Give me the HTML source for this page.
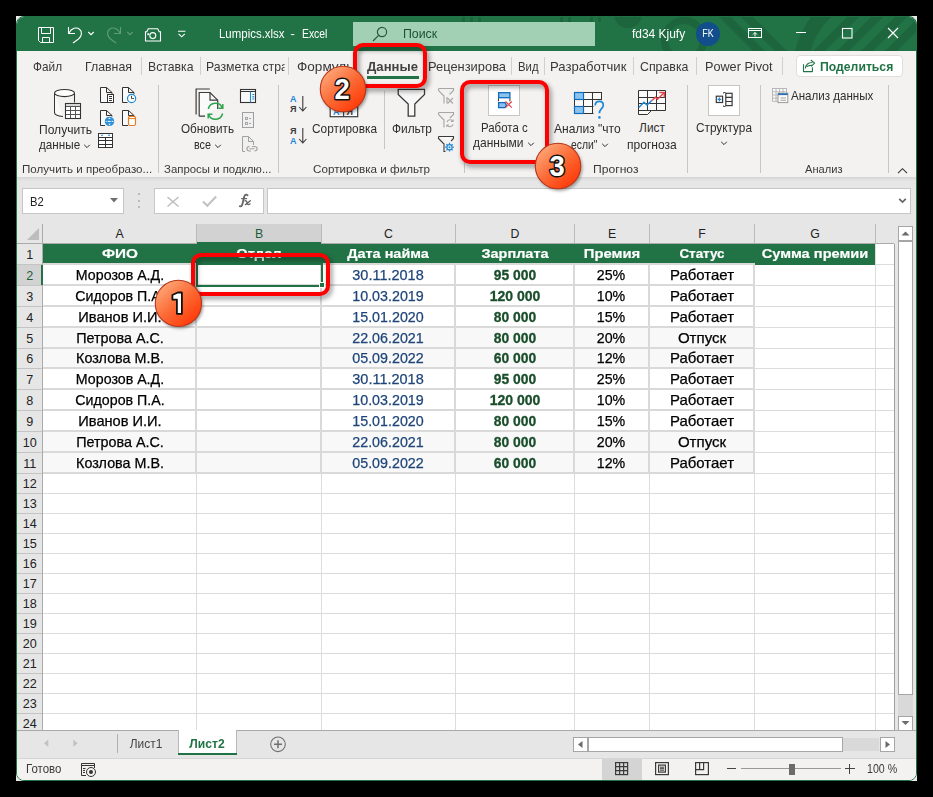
<!DOCTYPE html>
<html><head><meta charset="utf-8"><style>
html,body{margin:0;padding:0;}
body{width:933px;height:797px;background:#000;position:relative;overflow:hidden;font-family:"Liberation Sans",sans-serif;}
#outer{position:absolute;left:16px;top:16px;width:901px;height:765px;background:#eaeaea;}
#win{position:absolute;left:16px;top:16px;width:901px;height:765px;box-sizing:border-box;border:1px solid #217346;border-radius:8px;overflow:hidden;background:#f3f2f1;}
.t{position:absolute;white-space:nowrap;}
.r{position:absolute;}
</style></head><body>
<div id="outer"></div>
<div id="win">
<div class="r" style="left:0px;top:-1px;width:899px;height:35px;background:#217346;"></div>
<svg class="r" style="left:0px;top:-1px;" width="899" height="35" viewBox="0 0 899 35"><g fill="#1d653c" transform="translate(-17,-16)">
<circle cx="628" cy="14" r="14"/>
<path d="M684 17 a23 23 0 1 0 0.01 0 Z M684 24 a16 16 0 1 1 -0.01 0 Z" fill-rule="evenodd"/>
<path d="M880 -17 a87 87 0 1 0 0.01 0 Z M880 -2 a72 72 0 1 1 -0.01 0 Z" fill-rule="evenodd"/>
<path d="M718 16 L730 16 L765 51 L753 51 Z"/>
<path d="M740 16 L752 16 L787 51 L775 51 Z"/>
<path d="M848 16 L860 16 L825 51 L813 51 Z"/>
<path d="M872 16 L884 16 L849 51 L837 51 Z"/>
<path d="M896 16 L908 16 L873 51 L861 51 Z"/>
<path d="M920 16 L932 16 L897 51 L885 51 Z"/>
<path d="M462 16 h3 v6 h-3 Z M470 16 h3 v6 h-3 Z M478 16 h3 v6 h-3 Z M560 16 h3 v6 h-3 Z M568 16 h3 v6 h-3 Z M590 16 h3 v6 h-3 Z M598 16 h3 v6 h-3 Z"/>
</g></svg>
<svg class="r" style="left:17px;top:5px;" width="24" height="24" viewBox="0 0 24 24"><g fill="none" stroke="#fff" stroke-width="1"><path d="M4.5 5.5 H19.5 V20.5 H6.5 L4.5 18.5 Z"/><path d="M7.5 5.5 V11.5 H16.5 V5.5"/><path d="M8.5 20.5 V15.5 H15.5 V20.5"/></g></svg>
<svg class="r" style="left:47px;top:5px;" width="22" height="24" viewBox="0 0 22 24"><g fill="none" stroke="#fff" stroke-width="1.1"><path d="M4.5 5 V11.5 H11"/><path d="M4.8 11.2 C7.5 6 12.5 4.8 15.5 7.2 C18.5 9.6 18 14 14.5 17 L9 21"/></g></svg>
<svg class="r" style="left:69px;top:12px;" width="10" height="8" viewBox="0 0 10 8"><path d="M2.3 3 L5 5.7 L7.7 3" fill="none" stroke="#fff" stroke-width="1.1"/></svg>
<svg class="r" style="left:86px;top:5px;" width="22" height="24" viewBox="0 0 22 24"><g fill="none" stroke="#5e9d78" stroke-width="1.1"><path d="M17.5 5 V11.5 H11"/><path d="M17.2 11.2 C14.5 6 9.5 4.8 6.5 7.2 C3.5 9.6 4 14 7.5 17 L13 21"/></g></svg>
<svg class="r" style="left:108px;top:12px;" width="10" height="8" viewBox="0 0 10 8"><path d="M2.3 3 L5 5.7 L7.7 3" fill="none" stroke="#5e9d78" stroke-width="1.1"/></svg>
<svg class="r" style="left:125px;top:9px;" width="22" height="18" viewBox="0 0 22 18"><g fill="none" stroke="#fff" stroke-width="1.1"><path d="M3.5 5.8 H4.8 L6.3 2.8 H15.7 L17.2 5.8 H18.5 V15 H3.5 Z"/><circle cx="10.8" cy="9.6" r="3"/></g><rect x="5.3" y="7.3" width="1.8" height="1.8" fill="#fff"/></svg>
<svg class="r" style="left:159px;top:11px;" width="12" height="12" viewBox="0 0 12 12"><g fill="none" stroke="#fff" stroke-width="1.1"><path d="M2 3.3 H9.4"/><path d="M2.6 5.8 L5.7 8.8 L8.8 5.8"/></g></svg>
<div class="t" style="top:11.00px;font-size:12.4px;line-height:12.4px;color:#fff;transform:scaleX(0.9241);transform-origin:left top;left:202.30px;">Lumpics.xlsx</div>
<div class="t" style="top:11.00px;font-size:12.4px;line-height:12.4px;color:#fff;left:273.50px;">-</div>
<div class="t" style="top:11.00px;font-size:12.4px;line-height:12.4px;color:#fff;transform:scaleX(0.8378);transform-origin:left top;left:285.40px;">Excel</div>
<div class="r" style="left:336px;top:5px;width:242px;height:24px;background:#a2d0b5;"></div>
<svg class="r" style="left:354px;top:9px;" width="18" height="16" viewBox="0 0 18 16"><g fill="none" stroke="#265a3a" stroke-width="1.2"><circle cx="11" cy="6" r="4.6"/><path d="M7.6 9.4 L2 15"/></g></svg>
<div class="t" style="top:10.92px;font-size:12.5px;line-height:12.5px;color:#1c5231;transform:scaleX(0.9859);transform-origin:left top;left:386.00px;">Поиск</div>
<div class="t" style="top:11.00px;font-size:12.4px;line-height:12.4px;color:#fff;transform:scaleX(0.9647);transform-origin:left top;left:615.00px;">fd34 Kjufy</div>
<svg class="r" style="left:679px;top:5px;" width="24" height="24" viewBox="0 0 24 24"><circle cx="12" cy="12" r="12" fill="#124d8c"/></svg>
<div class="t" style="top:11.43px;font-size:11.3px;line-height:11.3px;color:#fff;transform:scaleX(0.7897);transform-origin:center top;left:391.00px;width:600px;text-align:center;">FK</div>
<svg class="r" style="left:730px;top:10px;" width="16" height="12" viewBox="0 0 16 12"><g fill="none" stroke="#fff" stroke-width="1"><rect x="1.5" y="1.5" width="13" height="9"/><path d="M1.5 3.5 H14.5"/><path d="M8 9.5 V5.5 M6 7.5 L8 5.5 L10 7.5"/></g></svg>
<div class="r" style="left:779px;top:15px;width:10px;height:1px;background:#fff;"></div>
<svg class="r" style="left:824px;top:10px;" width="12" height="12" viewBox="0 0 12 12"><rect x="1.5" y="1.5" width="9.5" height="9.5" fill="none" stroke="#fff" stroke-width="1.1"/></svg>
<svg class="r" style="left:870px;top:10px;" width="12" height="12" viewBox="0 0 12 12"><path d="M1 1 L11 11 M11 1 L1 11" stroke="#fff" stroke-width="1.2"/></svg>
<div class="r" style="left:0px;top:34px;width:899px;height:126px;background:#f3f2f1;"></div>
<div class="t" style="top:43.20px;font-size:13px;line-height:13px;color:#383838;transform:scaleX(0.9077);transform-origin:left top;left:15.50px;">Файл</div>
<div class="t" style="top:43.20px;font-size:13px;line-height:13px;color:#383838;transform:scaleX(0.9495);transform-origin:left top;left:68.20px;">Главная</div>
<div class="t" style="top:43.20px;font-size:13px;line-height:13px;color:#383838;transform:scaleX(0.9415);transform-origin:left top;left:130.70px;">Вставка</div>
<div class="t" style="top:43.20px;font-size:13px;line-height:13px;color:#383838;transform:scaleX(0.9434);transform-origin:left top;left:188.50px;clip-path:inset(-5px calc(100% - 83.2px) -5px -5px);">Разметка стра</div>
<div class="t" style="top:43.20px;font-size:13px;line-height:13px;color:#383838;transform:scaleX(1.0427);transform-origin:left top;left:280.00px;">Формулы</div>
<div class="t" style="top:43.20px;font-size:13px;line-height:13px;color:#383838;transform:scaleX(0.9909);transform-origin:left top;left:411.00px;">Рецензирова</div>
<div class="t" style="top:43.20px;font-size:13px;line-height:13px;color:#383838;transform:scaleX(0.8712);transform-origin:left top;left:500.50px;">Вид</div>
<div class="t" style="top:43.20px;font-size:13px;line-height:13px;color:#383838;transform:scaleX(1.0081);transform-origin:left top;left:533.00px;">Разработчик</div>
<div class="t" style="top:43.20px;font-size:13px;line-height:13px;color:#383838;transform:scaleX(0.9505);transform-origin:left top;left:622.70px;">Справка</div>
<div class="t" style="top:43.20px;font-size:13px;line-height:13px;color:#383838;transform:scaleX(0.9733);transform-origin:left top;left:688.00px;">Power Pivot</div>
<div class="r" style="left:124px;top:40px;width:1px;height:18px;background:#d2d0ce;"></div>
<div class="r" style="left:183px;top:40px;width:1px;height:18px;background:#d2d0ce;"></div>
<div class="r" style="left:271px;top:40px;width:1px;height:18px;background:#d2d0ce;"></div>
<div class="r" style="left:494px;top:40px;width:1px;height:18px;background:#d2d0ce;"></div>
<div class="r" style="left:527px;top:40px;width:1px;height:18px;background:#d2d0ce;"></div>
<div class="r" style="left:616px;top:40px;width:1px;height:18px;background:#d2d0ce;"></div>
<div class="r" style="left:679px;top:40px;width:1px;height:18px;background:#d2d0ce;"></div>
<div class="r" style="left:765px;top:40px;width:1px;height:18px;background:#d2d0ce;"></div>
<div class="t" style="top:43.20px;font-size:13px;line-height:13px;color:#424242;transform:scaleX(1.0092);transform-origin:left top;font-weight:bold;left:350.00px;">Данные</div>
<div class="r" style="left:350px;top:59px;width:52px;height:3px;background:#217346;"></div>
<div class="r" style="left:779px;top:38px;width:107px;height:22px;background:#fff;border:1px solid #e1dfdd;border-radius:4px;box-sizing:border-box;"></div>
<svg class="r" style="left:783px;top:40px;" width="18" height="18" viewBox="0 0 18 18"><g fill="none" stroke="#217346" stroke-width="1.1" stroke-linejoin="round"><path d="M3.5 7.3 V14.6 H12.4 V10.2"/><path d="M5.3 11.5 C5.8 7.5 8.5 5.5 12.5 5.5"/><path d="M10.8 3 L14.6 6.2 L11.2 9.4"/><path d="M6.5 9.8 C8 8.7 9.8 8.3 12 8.4"/></g></svg>
<div class="t" style="top:43.00px;font-size:13px;line-height:13px;color:#217346;transform:scaleX(0.9394);transform-origin:left top;font-weight:bold;left:803.20px;">Поделиться</div>
<div class="r" style="left:141px;top:68px;width:1px;height:88px;background:#c8c6c4;"></div>
<div class="r" style="left:261px;top:68px;width:1px;height:88px;background:#c8c6c4;"></div>
<div class="r" style="left:367px;top:74px;width:1px;height:58px;background:#c8c6c4;"></div>
<div class="r" style="left:447px;top:143px;width:1px;height:13px;background:#c8c6c4;"></div>
<div class="r" style="left:670px;top:68px;width:1px;height:88px;background:#c8c6c4;"></div>
<div class="r" style="left:743px;top:68px;width:1px;height:88px;background:#c8c6c4;"></div>
<div class="r" style="left:871px;top:68px;width:1px;height:88px;background:#c8c6c4;"></div>
<div class="t" style="top:146.77px;font-size:11.5px;line-height:11.5px;color:#3b3a39;transform:scaleX(1.0082);transform-origin:left top;left:4.60px;">Получить и преобразо...</div>
<div class="t" style="top:146.77px;font-size:11.5px;line-height:11.5px;color:#3b3a39;transform:scaleX(0.9912);transform-origin:left top;left:147.00px;">Запросы и подклю...</div>
<div class="t" style="top:146.77px;font-size:11.5px;line-height:11.5px;color:#3b3a39;transform:scaleX(1.0157);transform-origin:left top;left:295.60px;">Сортировка и фильтр</div>
<div class="t" style="top:146.77px;font-size:11.5px;line-height:11.5px;color:#3b3a39;transform:scaleX(1.0544);transform-origin:left top;left:575.50px;">Прогноз</div>
<div class="t" style="top:146.77px;font-size:11.5px;line-height:11.5px;color:#3b3a39;transform:scaleX(0.9662);transform-origin:left top;left:788.30px;">Анализ</div>
<svg class="r" style="left:879px;top:149px;" width="13" height="9" viewBox="0 0 13 9"><path d="M2 7.2 L6.5 2.7 L11 7.2" fill="none" stroke="#333" stroke-width="1.1"/></svg>
<svg class="r" style="left:33px;top:68px;" width="34" height="36" viewBox="0 0 34 36"><g fill="#fafafa" stroke="#333" stroke-width="1.05">
<path d="M4.5 8 V27.5 C4.5 29.8 8.5 31.2 13 31.5"/>
<path d="M24.5 8 V17.5"/>
<ellipse cx="14.5" cy="8" rx="10" ry="3.6" fill="#fff"/>
<rect x="15.5" y="18.5" width="15" height="15" fill="#fff"/>
</g>
<rect x="16.2" y="19.2" width="13.6" height="2" fill="#d4d4d4"/>
<g stroke="#555" stroke-width="1"><path d="M15.5 21.5 H30.5 M15.5 25.5 H30.5 M15.5 29.5 H30.5 M20.5 21.5 V33.5 M25.5 21.5 V33.5"/></g>
<rect x="15.5" y="18.5" width="15" height="15" fill="none" stroke="#333" stroke-width="1.05"/></svg>
<div class="t" style="top:106.77px;font-size:12.2px;line-height:12.2px;color:#2e2e2e;transform:scaleX(0.9903);transform-origin:left top;left:21.60px;">Получить</div>
<div class="t" style="top:121.97px;font-size:12.2px;line-height:12.2px;color:#2e2e2e;transform:scaleX(0.9594);transform-origin:left top;left:22.00px;">данные</div>
<svg class="r" style="left:65.8px;top:126px;" width="8" height="6" viewBox="0 0 8 6"><path d="M1.2 1.8 L4 4.6 L6.8 1.8" fill="none" stroke="#2e2e2e" stroke-width="1"/></svg>
<svg class="r" style="left:79px;top:67px;" width="44" height="44" viewBox="0 0 44 44"><path d="M10.5 8.5 V3.5 H4.5 V18.5 H11" fill="#fafafa" stroke="#333" stroke-width="1"/><path d="M10.5 3.5 L16 8.5 V10 M10.5 8.5 H16" fill="none" stroke="#333" stroke-width="1"/><rect x="11.5" y="10.5" width="6" height="8" fill="#fff" stroke="#333" stroke-width="1"/><path d="M13 12.5 H16 M13 14.5 H16 M13 16.5 H16" stroke="#333" stroke-width="1"/><path d="M32.5 8.5 V3.5 H26.5 V18.5 H31.5" fill="#fafafa" stroke="#333" stroke-width="1"/><path d="M32.5 3.5 L38 8.5 V10 M32.5 8.5 H38" fill="none" stroke="#333" stroke-width="1"/><circle cx="35.6" cy="14.5" r="4.1" fill="#fff" stroke="#1e88d6" stroke-width="1.2"/><path d="M35.5 11.8 V14.6 H38" fill="none" stroke="#333" stroke-width="0.9"/><path d="M10.5 31.5 V26.5 H4.5 V41.5 H9" fill="#fafafa" stroke="#333" stroke-width="1"/><path d="M10.5 26.5 L16 31.5 V32.5 M10.5 31.5 H16" fill="none" stroke="#333" stroke-width="1"/><circle cx="13.5" cy="37.4" r="4.7" fill="#2b8fd9"/><path d="M9.6 37.4 H17.4" stroke="#fff" stroke-width="1" stroke-dasharray="1 1 3 1 3 1"/><path d="M12.2 35 L13.5 33.5 L14.8 35 Z M12.2 39.8 L13.5 41.3 L14.8 39.8 Z" fill="#fff"/><path d="M32.5 31.5 V26.5 H26.5 V41.5 H32" fill="#fafafa" stroke="#333" stroke-width="1"/><path d="M32.5 26.5 L38 31.5 V32 M32.5 31.5 H38" fill="none" stroke="#333" stroke-width="1"/><rect x="32.5" y="32.3" width="7" height="9.2" rx="1.8" fill="#fff" stroke="#e07b20" stroke-width="1.2"/><path d="M32.5 34.6 H39.5" stroke="#e07b20" stroke-width="1"/></svg>
<svg class="r" style="left:79px;top:113px;" width="20" height="20" viewBox="0 0 20 20"><rect x="2.5" y="3.5" width="14" height="14" fill="#fff" stroke="#333" stroke-width="1"/>
<path d="M2.5 7.5 H16.5 M2.5 10.5 H16.5 M2.5 14.5 H16.5 M9.5 7.5 V17.5" stroke="#333" stroke-width="1"/>
<path d="M4.5 4.8 H7.5 L6 6.3 Z M11.5 4.8 H14.5 L13 6.3 Z" fill="#1e88d6"/></svg>
<svg class="r" style="left:177px;top:70px;" width="32" height="34" viewBox="0 0 32 34"><path d="M2.1 27.4 V2 H15.8" fill="none" stroke="#3b3a39" stroke-width="1.2"/>
<path d="M5.2 29.2 V5.5 H16 L23.7 13.2 V22" fill="#fafafa" stroke="#3b3a39" stroke-width="1.2"/>
<path d="M5.2 29.2 H11" fill="none" stroke="#3b3a39" stroke-width="1.2"/>
<path d="M16 5.5 V13.2 H23.7" fill="none" stroke="#3b3a39" stroke-width="1.2"/>
<g fill="none" stroke="#2ea44f" stroke-width="1.5"><path d="M14.3 22 A7.3 7.3 0 0 1 28.3 21"/><path d="M28.6 26.5 A7.3 7.3 0 0 1 14.6 27.5"/></g>
<path d="M24.5 21.3 H28.8 V17" fill="none" stroke="#2ea44f" stroke-width="1.5"/>
<path d="M18.4 27.3 H14.2 V31.5" fill="none" stroke="#2ea44f" stroke-width="1.5"/></svg>
<div class="t" style="top:106.17px;font-size:12.2px;line-height:12.2px;color:#2e2e2e;transform:scaleX(0.9613);transform-origin:left top;left:163.50px;">Обновить</div>
<div class="t" style="top:121.97px;font-size:12.2px;line-height:12.2px;color:#2e2e2e;transform:scaleX(0.8847);transform-origin:left top;left:177.00px;">все</div>
<svg class="r" style="left:196.5px;top:125.6px;" width="8" height="6" viewBox="0 0 8 6"><path d="M1.2 1.8 L4 4.6 L6.8 1.8" fill="none" stroke="#2e2e2e" stroke-width="1"/></svg>
<svg class="r" style="left:215px;top:67px;" width="32" height="72" viewBox="0 0 32 72"><rect x="8.5" y="5.5" width="15" height="13" fill="#fafafa" stroke="#333" stroke-width="1.1"/>
<path d="M8.5 7.5 H23.5" stroke="#333" stroke-width="1"/><path d="M18.5 7.5 V18.5" stroke="#1e88d6" stroke-width="1.1"/>
<path d="M20.3 10.5 H22.3 M20.3 12.8 H22.3 M20.3 15 H22.3" stroke="#1e88d6" stroke-width="1.2"/>
<rect x="10.5" y="28.5" width="11" height="15" fill="#f0f0f0" stroke="#a0a0a0" stroke-width="1"/>
<rect x="13.5" y="33.5" width="2" height="2" fill="none" stroke="#a0a0a0" stroke-width="0.9"/><rect x="13.5" y="38.5" width="2" height="2" fill="none" stroke="#a0a0a0" stroke-width="0.9"/>
<path d="M17 34.5 H19 M17 39.5 H19" stroke="#a0a0a0" stroke-width="0.9"/>
<path d="M10.5 67.5 V52.5 H16.5 L21.5 57.5 V61" fill="#f0f0f0" stroke="#a0a0a0" stroke-width="1"/><path d="M16.5 52.5 V57.5 H21.5" fill="none" stroke="#a0a0a0" stroke-width="1"/><path d="M10.5 67.5 H13" stroke="#a0a0a0" stroke-width="1"/>
<g fill="none" stroke="#a0a0a0" stroke-width="1.1"><path d="M17.5 62.5 C14 62.5 14 67 17.5 67 H19"/><path d="M20 62.5 H22.5 C26 62.5 26 67 22.5 67"/><path d="M17.5 64.8 H22.5"/></g></svg>
<div class="t" style="left:273px;top:78px;font-size:9px;line-height:9px;font-weight:bold;color:#1e88d6;">A</div>
<div class="t" style="left:273px;top:87.5px;font-size:9px;line-height:9px;font-weight:bold;color:#3b3a39;">Я</div>
<div class="t" style="left:273px;top:110px;font-size:9px;line-height:9px;font-weight:bold;color:#3b3a39;">Я</div>
<div class="t" style="left:273px;top:119.5px;font-size:9px;line-height:9px;font-weight:bold;color:#1e88d6;">A</div>
<svg class="r" style="left:281px;top:78px;" width="10" height="18" viewBox="0 0 10 18"><path d="M4.8 1 V16 M1.2 12 L4.8 16 L8.4 12" fill="none" stroke="#3b3a39" stroke-width="1.1"/></svg>
<svg class="r" style="left:281px;top:110px;" width="10" height="18" viewBox="0 0 10 18"><path d="M4.8 1 V16 M1.2 12 L4.8 16 L8.4 12" fill="none" stroke="#3b3a39" stroke-width="1.1"/></svg>
<svg class="r" style="left:312px;top:75px;" width="30" height="26" viewBox="0 0 30 26"><rect x="1.2" y="1.2" width="27.5" height="23.5" fill="#fff" stroke="#3b3a39" stroke-width="1.2"/>
<path d="M14.6 14 V24.7 M1.2 14 H28.7" stroke="#3b3a39" stroke-width="1.1"/>
<text x="4" y="23" font-size="9" font-weight="bold" fill="#1e88d6" font-family="Liberation Sans">A</text><text x="17.5" y="23" font-size="9" font-weight="bold" fill="#3b3a39" font-family="Liberation Sans">Я</text></svg>
<div class="t" style="top:106.17px;font-size:12.2px;line-height:12.2px;color:#2e2e2e;transform:scaleX(0.9720);transform-origin:left top;left:294.60px;">Сортировка</div>
<svg class="r" style="left:379px;top:71px;" width="31" height="30" viewBox="0 0 31 30"><path d="M2.2 1.3 H28.5 V6.5 L18.8 16 V28.2 H12.2 V16 L2.2 6.5 Z" fill="#f7f7f7" stroke="#3b3a39" stroke-width="1.3"/></svg>
<div class="t" style="top:106.17px;font-size:12.2px;line-height:12.2px;color:#2e2e2e;transform:scaleX(0.9758);transform-origin:left top;left:374.50px;">Фильтр</div>
<svg class="r" style="left:420px;top:70px;" width="18" height="18" viewBox="0 0 18 18"><path d="M1.5 1.5 H16.5 V3.5 L12.5 7.5 M10 10 V16.5 M1.5 1.5 V3.5 L7 9 V16.5" fill="#f0f0f0" stroke="#a6a6a6" stroke-width="1.1"/>
<path d="M10.5 11 L16 16.5 M16 11 L10.5 16.5" stroke="#a6a6a6" stroke-width="1.1"/></svg>
<svg class="r" style="left:420px;top:94px;" width="18" height="18" viewBox="0 0 18 18"><path d="M1.5 1.5 H16.5 V3.5 L13 7 M1.5 1.5 V3.5 L7 9 V16.5" fill="#f0f0f0" stroke="#a6a6a6" stroke-width="1.1"/>
<path d="M10 11 A3.3 3.3 0 0 1 16 10.5 M16 13.5 A3.3 3.3 0 0 1 10 14" fill="none" stroke="#a6a6a6" stroke-width="1.1"/><path d="M14 10.5 H16.2 V8.5 M12 14 H9.8 V16" fill="none" stroke="#a6a6a6" stroke-width="1"/></svg>
<svg class="r" style="left:420px;top:118px;" width="18" height="18" viewBox="0 0 18 18"><path d="M1.5 1.5 H16.5 V3.5 L14 6 M1.5 1.5 V3.5 L7 9 V16.5 H8.5" fill="#fafafa" stroke="#3b3a39" stroke-width="1.1"/>
<g fill="none" stroke="#1e88d6" stroke-width="1.2"><circle cx="12.5" cy="12.2" r="2.6"/><path d="M12.5 7.8 V9.3 M12.5 15.1 V16.6 M8.1 12.2 H9.6 M15.4 12.2 H16.9 M9.4 9.1 L10.4 10.1 M14.6 14.3 L15.6 15.3 M15.6 9.1 L14.6 10.1 M10.4 14.3 L9.4 15.3"/></g><circle cx="12.5" cy="12.2" r="1" fill="#1e88d6"/></svg>
<div class="r" style="left:471px;top:68px;width:32px;height:31px;background:#fff;border:1px solid #c8c6c4;box-sizing:border-box;"></div>
<svg class="r" style="left:479px;top:73px;" width="20" height="20" viewBox="0 0 20 20"><rect x="2.6" y="2.7" width="11.3" height="5" fill="#8cc3ec" stroke="#0f6cbd" stroke-width="1.3"/>
<path d="M2.5 8.3 V11.2 M13.9 8.3 V11.2" stroke="#3b3a39" stroke-width="1.1"/>
<path d="M2.6 12.6 H9 L10.5 15.2 L9 17.7 H2.6 Z" fill="#8cc3ec" stroke="#0f6cbd" stroke-width="1.3"/>
<path d="M9.5 11.5 L15.8 17.6 M15.8 11.5 L9.5 17.6" stroke="#e8434b" stroke-width="1.2"/></svg>
<div class="t" style="top:104.97px;font-size:12.2px;line-height:12.2px;color:#2e2e2e;transform:scaleX(0.9388);transform-origin:left top;left:464.30px;">Работа с</div>
<div class="t" style="top:120.27px;font-size:12.2px;line-height:12.2px;color:#2e2e2e;transform:scaleX(0.9852);transform-origin:left top;left:456.00px;">данными</div>
<svg class="r" style="left:510.29999999999995px;top:123.80000000000001px;" width="8" height="6" viewBox="0 0 8 6"><path d="M1.2 1.8 L4 4.6 L6.8 1.8" fill="none" stroke="#2e2e2e" stroke-width="1"/></svg>
<svg class="r" style="left:555px;top:73px;" width="34" height="30" viewBox="0 0 34 30"><rect x="2.5" y="2.5" width="27" height="21" fill="#fafafa" stroke="#333" stroke-width="1"/>
<path d="M11.5 2.5 V23.5 M20.5 2.5 V23.5 M2.5 9.5 H29.5 M2.5 16.5 H29.5" stroke="#333" stroke-width="1"/>
<rect x="2.5" y="2.5" width="9" height="7" fill="#8cc3ec" stroke="#0f6cbd" stroke-width="1.2"/>
<rect x="2.5" y="16.5" width="9" height="7" fill="#8cc3ec" stroke="#0f6cbd" stroke-width="1.2"/>
<rect x="21" y="10.2" width="12" height="19" fill="#f3f2f1"/>
<path d="M29.5 2.5 V10" stroke="#333" stroke-width="1"/><path d="M20.5 10 V16.5 H21.5 M20.5 16.5 V23.5 H21.5" fill="none" stroke="#333" stroke-width="1"/>
<path d="M23.2 15.6 C23.2 12.6 25.2 11.4 27.3 11.4 C29.6 11.4 31.3 13 31.3 15.2 C31.3 18.6 27.4 18.9 27.4 23.2" fill="none" stroke="#1e88d6" stroke-width="1.7"/>
<circle cx="27.4" cy="27.4" r="1.3" fill="#1e88d6"/></svg>
<div class="t" style="top:106.17px;font-size:12.2px;line-height:12.2px;color:#2e2e2e;transform:scaleX(0.9882);transform-origin:left top;left:536.90px;">Анализ "что</div>
<div class="t" style="top:121.97px;font-size:12.2px;line-height:12.2px;color:#2e2e2e;transform:scaleX(0.8510);transform-origin:left top;left:554.00px;">если"</div>
<svg class="r" style="left:583.6px;top:124.9px;" width="8" height="6" viewBox="0 0 8 6"><path d="M1.2 1.8 L4 4.6 L6.8 1.8" fill="none" stroke="#2e2e2e" stroke-width="1"/></svg>
<svg class="r" style="left:619px;top:71px;" width="32" height="29" viewBox="0 0 32 29"><path d="M2.5 2.5 H29.5 V22.5 H15.5 L11.5 26.5 H2.5 Z" fill="#fafafa" stroke="#333" stroke-width="1"/>
<path d="M2.5 9.5 H29.5 M2.5 15.5 H29.5 M2.5 22.5 H15.5 M11.5 2.5 V22.5 M20.5 2.5 V22.5" stroke="#333" stroke-width="1"/>
<path d="M2.8 19.5 L8 14.3 L11 17 L15.8 12.5" fill="none" stroke="#1e88d6" stroke-width="1.5"/>
<path d="M15.8 12.5 L19.5 9.2 L21.5 11.2 L27.8 5" fill="none" stroke="#e8434b" stroke-width="1.5"/>
<path d="M23.3 4.5 H28.3 V9.5" fill="none" stroke="#e8434b" stroke-width="1.5"/></svg>
<div class="t" style="top:106.23px;font-size:11.9px;line-height:11.9px;color:#2e2e2e;left:335.00px;width:600px;text-align:center;">Лист</div>
<div class="t" style="top:121.97px;font-size:12.2px;line-height:12.2px;color:#2e2e2e;transform:scaleX(0.9878);transform-origin:left top;left:609.80px;">прогноза</div>
<div class="r" style="left:691px;top:68px;width:32px;height:31px;background:#fff;border:1px solid #c8c6c4;box-sizing:border-box;"></div>
<svg class="r" style="left:697px;top:74px;" width="22" height="18" viewBox="0 0 22 18"><rect x="2.3" y="5.2" width="6.3" height="6.3" fill="#fafafa" stroke="#3b3a39" stroke-width="1.2"/>
<path d="M5.45 6.5 V10.2 M3.6 8.35 H7.3" stroke="#1e88d6" stroke-width="1.3"/>
<path d="M9.5 2.5 V1.5 H11.5 M9.5 14.5 V15.5 H11.5" fill="none" stroke="#3b3a39" stroke-width="0.9"/>
<rect x="11.8" y="2.3" width="6.3" height="12.3" fill="#fafafa" stroke="#3b3a39" stroke-width="1.2"/>
<path d="M11.8 6.4 H18.1 M11.8 10.5 H18.1" stroke="#3b3a39" stroke-width="1.1"/></svg>
<div class="t" style="top:104.97px;font-size:12.2px;line-height:12.2px;color:#2e2e2e;transform:scaleX(0.9674);transform-origin:left top;left:679.00px;">Структура</div>
<svg class="r" style="left:702.5px;top:123px;" width="8" height="6" viewBox="0 0 8 6"><path d="M1.2 1.8 L4 4.6 L6.8 1.8" fill="none" stroke="#2e2e2e" stroke-width="1"/></svg>
<svg class="r" style="left:754px;top:70px;" width="18" height="17" viewBox="0 0 18 17"><g stroke="#b8b8b8" stroke-width="1" fill="#fafafa"><rect x="1.5" y="1.5" width="14" height="12.8"/><path d="M1.5 4.8 H15.5 M1.5 8 H15.5 M1.5 11.2 H15.5 M5 1.5 V14.3 M8.5 1.5 V14.3 M12 1.5 V14.3" fill="none"/></g>
<rect x="7" y="6.3" width="9.8" height="9.3" fill="#fafafa" stroke="#9a9a9a" stroke-width="1"/>
<rect x="7" y="6.3" width="9.8" height="1.8" fill="#2f6fb6"/>
<path d="M9.5 11 H15 M9.5 13.3 H15" stroke="#9a9a9a" stroke-width="0.9"/></svg>
<div class="t" style="top:72.87px;font-size:12.2px;line-height:12.2px;color:#2e2e2e;transform:scaleX(0.9489);transform-origin:left top;left:774.00px;">Анализ данных</div>
<div class="r" style="left:0px;top:160px;width:899px;height:47px;background:#e6e6e6;"></div>
<div class="r" style="left:0px;top:160px;width:899px;height:4px;background:linear-gradient(#d5d5d5,#e6e6e6);"></div>
<div class="r" style="left:5px;top:171px;width:102px;height:26px;background:#fff;border:1px solid #c6c6c6;box-sizing:border-box;"></div>
<div class="t" style="top:177.83px;font-size:13.2px;line-height:13.2px;color:#222;transform:scaleX(0.8490);transform-origin:left top;left:12.70px;">B2</div>
<svg class="r" style="left:93px;top:181px;" width="8" height="5" viewBox="0 0 8 5"><path d="M0 0 H8 L4 4.5 Z" fill="#707070"/></svg>
<div class="r" style="left:121px;top:176px;width:2px;height:2px;background:#ababab;border-radius:1px;"></div>
<div class="r" style="left:121px;top:182.5px;width:2px;height:2.0px;background:#ababab;border-radius:1px;"></div>
<div class="r" style="left:121px;top:189px;width:2px;height:2px;background:#ababab;border-radius:1px;"></div>
<div class="r" style="left:137px;top:171px;width:110px;height:26px;background:#fff;border:1px solid #c6c6c6;box-sizing:border-box;"></div>
<svg class="r" style="left:149px;top:179px;" width="14" height="12" viewBox="0 0 14 12"><path d="M1.5 1 L12.5 10.5 M12.5 1 L1.5 10.5" stroke="#bdbdbd" stroke-width="1.5"/></svg>
<svg class="r" style="left:184px;top:178px;" width="17" height="13" viewBox="0 0 17 13"><path d="M2 6.5 L6.3 10.8 L15.2 1.5" fill="none" stroke="#c2c2c2" stroke-width="2.1"/></svg>
<svg class="r" style="left:219px;top:175px;" width="18" height="17" viewBox="0 0 18 17"><g fill="none" stroke="#666" stroke-linecap="round"><path d="M3.8 14.2 C5.5 14.8 6.2 13.5 6.8 10.5 L8.3 4.5 C8.8 2.8 10 2.2 11.6 3.2" stroke-width="1.8"/><path d="M5.6 6.6 H10.6" stroke-width="1.3"/><path d="M9 8.8 C10 8.5 10.8 8.8 11.6 12.2 M9.5 12.6 L14.3 8.8 M12.2 12.6 C13 12.7 13.5 12.4 14 12" stroke-width="1.4"/></g></svg>
<div class="r" style="left:250px;top:171px;width:644px;height:26px;background:#fff;border:1px solid #c6c6c6;box-sizing:border-box;"></div>
<svg class="r" style="left:879px;top:179px;" width="12" height="9" viewBox="0 0 12 9"><path d="M3.2 2.8 L6.5 6.1 L9.8 2.8" fill="none" stroke="#666" stroke-width="1.7"/></svg>
<div class="r" style="left:0px;top:207px;width:899px;height:506px;background:#e6e6e6;"></div>
<div class="r" style="left:26px;top:227px;width:851px;height:486px;background:#fff;"></div>
<svg class="r" style="left:10px;top:211px;" width="13" height="12" viewBox="0 0 13 12"><path d="M12 0 V12 H0 Z" fill="#bdbdbd"/></svg>
<div class="r" style="left:180px;top:207px;width:124px;height:19px;background:#d2d2d2;"></div>
<div class="r" style="left:179px;top:207px;width:1px;height:19px;background:#bababa;"></div>
<div class="r" style="left:304px;top:207px;width:1px;height:19px;background:#bababa;"></div>
<div class="r" style="left:438px;top:207px;width:1px;height:19px;background:#bababa;"></div>
<div class="r" style="left:557px;top:207px;width:1px;height:19px;background:#bababa;"></div>
<div class="r" style="left:632px;top:207px;width:1px;height:19px;background:#bababa;"></div>
<div class="r" style="left:737px;top:207px;width:1px;height:19px;background:#bababa;"></div>
<div class="r" style="left:858px;top:207px;width:1px;height:19px;background:#bababa;"></div>
<div class="r" style="left:0px;top:226px;width:877px;height:1px;background:#ababab;"></div>
<div class="r" style="left:180px;top:225px;width:124px;height:2px;background:#217346;"></div>
<div class="t" style="top:210.59px;font-size:12.3px;line-height:12.3px;color:#222;left:-197.50px;width:600px;text-align:center;">A</div>
<div class="t" style="top:210.59px;font-size:12.3px;line-height:12.3px;color:#1f5c3a;left:-58.00px;width:600px;text-align:center;">B</div>
<div class="t" style="top:210.59px;font-size:12.3px;line-height:12.3px;color:#222;left:71.50px;width:600px;text-align:center;">C</div>
<div class="t" style="top:210.59px;font-size:12.3px;line-height:12.3px;color:#222;left:198.00px;width:600px;text-align:center;">D</div>
<div class="t" style="top:210.59px;font-size:12.3px;line-height:12.3px;color:#222;left:295.00px;width:600px;text-align:center;">E</div>
<div class="t" style="top:210.59px;font-size:12.3px;line-height:12.3px;color:#222;left:385.00px;width:600px;text-align:center;">F</div>
<div class="t" style="top:210.59px;font-size:12.3px;line-height:12.3px;color:#222;left:498.00px;width:600px;text-align:center;">G</div>
<div class="r" style="left:26px;top:247px;width:851px;height:1px;background:#dcdcdc;"></div>
<div class="r" style="left:26px;top:268px;width:851px;height:1px;background:#dcdcdc;"></div>
<div class="r" style="left:26px;top:289px;width:851px;height:1px;background:#dcdcdc;"></div>
<div class="r" style="left:26px;top:310px;width:851px;height:1px;background:#dcdcdc;"></div>
<div class="r" style="left:26px;top:331px;width:851px;height:1px;background:#dcdcdc;"></div>
<div class="r" style="left:26px;top:351px;width:851px;height:1px;background:#dcdcdc;"></div>
<div class="r" style="left:26px;top:372px;width:851px;height:1px;background:#dcdcdc;"></div>
<div class="r" style="left:26px;top:393px;width:851px;height:1px;background:#dcdcdc;"></div>
<div class="r" style="left:26px;top:414px;width:851px;height:1px;background:#dcdcdc;"></div>
<div class="r" style="left:26px;top:435px;width:851px;height:1px;background:#dcdcdc;"></div>
<div class="r" style="left:26px;top:456px;width:851px;height:1px;background:#dcdcdc;"></div>
<div class="r" style="left:26px;top:476px;width:851px;height:1px;background:#dcdcdc;"></div>
<div class="r" style="left:26px;top:496px;width:851px;height:1px;background:#dcdcdc;"></div>
<div class="r" style="left:26px;top:516px;width:851px;height:1px;background:#dcdcdc;"></div>
<div class="r" style="left:26px;top:536px;width:851px;height:1px;background:#dcdcdc;"></div>
<div class="r" style="left:26px;top:556px;width:851px;height:1px;background:#dcdcdc;"></div>
<div class="r" style="left:26px;top:576px;width:851px;height:1px;background:#dcdcdc;"></div>
<div class="r" style="left:26px;top:596px;width:851px;height:1px;background:#dcdcdc;"></div>
<div class="r" style="left:26px;top:616px;width:851px;height:1px;background:#dcdcdc;"></div>
<div class="r" style="left:26px;top:636px;width:851px;height:1px;background:#dcdcdc;"></div>
<div class="r" style="left:26px;top:656px;width:851px;height:1px;background:#dcdcdc;"></div>
<div class="r" style="left:26px;top:676px;width:851px;height:1px;background:#dcdcdc;"></div>
<div class="r" style="left:26px;top:696px;width:851px;height:1px;background:#dcdcdc;"></div>
<div class="r" style="left:179px;top:227px;width:1px;height:486px;background:#dcdcdc;"></div>
<div class="r" style="left:304px;top:227px;width:1px;height:486px;background:#dcdcdc;"></div>
<div class="r" style="left:438px;top:227px;width:1px;height:486px;background:#dcdcdc;"></div>
<div class="r" style="left:557px;top:227px;width:1px;height:486px;background:#dcdcdc;"></div>
<div class="r" style="left:632px;top:227px;width:1px;height:486px;background:#dcdcdc;"></div>
<div class="r" style="left:737px;top:227px;width:1px;height:486px;background:#dcdcdc;"></div>
<div class="r" style="left:858px;top:227px;width:1px;height:486px;background:#dcdcdc;"></div>
<div class="r" style="left:877px;top:227px;width:1px;height:486px;background:#a0a0a0;"></div>
<div class="r" style="left:0px;top:247px;width:25px;height:1px;background:#c4c4c4;"></div>
<div class="r" style="left:0px;top:268px;width:25px;height:1px;background:#c4c4c4;"></div>
<div class="r" style="left:0px;top:289px;width:25px;height:1px;background:#c4c4c4;"></div>
<div class="r" style="left:0px;top:310px;width:25px;height:1px;background:#c4c4c4;"></div>
<div class="r" style="left:0px;top:331px;width:25px;height:1px;background:#c4c4c4;"></div>
<div class="r" style="left:0px;top:351px;width:25px;height:1px;background:#c4c4c4;"></div>
<div class="r" style="left:0px;top:372px;width:25px;height:1px;background:#c4c4c4;"></div>
<div class="r" style="left:0px;top:393px;width:25px;height:1px;background:#c4c4c4;"></div>
<div class="r" style="left:0px;top:414px;width:25px;height:1px;background:#c4c4c4;"></div>
<div class="r" style="left:0px;top:435px;width:25px;height:1px;background:#c4c4c4;"></div>
<div class="r" style="left:0px;top:456px;width:25px;height:1px;background:#c4c4c4;"></div>
<div class="r" style="left:0px;top:476px;width:25px;height:1px;background:#c4c4c4;"></div>
<div class="r" style="left:0px;top:496px;width:25px;height:1px;background:#c4c4c4;"></div>
<div class="r" style="left:0px;top:516px;width:25px;height:1px;background:#c4c4c4;"></div>
<div class="r" style="left:0px;top:536px;width:25px;height:1px;background:#c4c4c4;"></div>
<div class="r" style="left:0px;top:556px;width:25px;height:1px;background:#c4c4c4;"></div>
<div class="r" style="left:0px;top:576px;width:25px;height:1px;background:#c4c4c4;"></div>
<div class="r" style="left:0px;top:596px;width:25px;height:1px;background:#c4c4c4;"></div>
<div class="r" style="left:0px;top:616px;width:25px;height:1px;background:#c4c4c4;"></div>
<div class="r" style="left:0px;top:636px;width:25px;height:1px;background:#c4c4c4;"></div>
<div class="r" style="left:0px;top:656px;width:25px;height:1px;background:#c4c4c4;"></div>
<div class="r" style="left:0px;top:676px;width:25px;height:1px;background:#c4c4c4;"></div>
<div class="r" style="left:0px;top:696px;width:25px;height:1px;background:#c4c4c4;"></div>
<div class="r" style="left:0px;top:248px;width:25px;height:20px;background:#d2d2d2;"></div>
<div class="r" style="left:25px;top:207px;width:1px;height:506px;background:#ababab;"></div>
<div class="r" style="left:24px;top:248px;width:2px;height:20px;background:#217346;"></div>
<div class="t" style="top:232.13px;font-size:12.6px;line-height:12.6px;color:#222;left:-287.20px;width:600px;text-align:center;">1</div>
<div class="t" style="top:253.13px;font-size:12.6px;line-height:12.6px;color:#1f5c3a;left:-287.20px;width:600px;text-align:center;">2</div>
<div class="t" style="top:274.13px;font-size:12.6px;line-height:12.6px;color:#222;left:-287.20px;width:600px;text-align:center;">3</div>
<div class="t" style="top:295.13px;font-size:12.6px;line-height:12.6px;color:#222;left:-287.20px;width:600px;text-align:center;">4</div>
<div class="t" style="top:316.13px;font-size:12.6px;line-height:12.6px;color:#222;left:-287.20px;width:600px;text-align:center;">5</div>
<div class="t" style="top:336.13px;font-size:12.6px;line-height:12.6px;color:#222;left:-287.20px;width:600px;text-align:center;">6</div>
<div class="t" style="top:357.13px;font-size:12.6px;line-height:12.6px;color:#222;left:-287.20px;width:600px;text-align:center;">7</div>
<div class="t" style="top:378.13px;font-size:12.6px;line-height:12.6px;color:#222;left:-287.20px;width:600px;text-align:center;">8</div>
<div class="t" style="top:399.13px;font-size:12.6px;line-height:12.6px;color:#222;left:-287.20px;width:600px;text-align:center;">9</div>
<div class="t" style="top:420.13px;font-size:12.6px;line-height:12.6px;color:#222;left:-287.20px;width:600px;text-align:center;">10</div>
<div class="t" style="top:441.13px;font-size:12.6px;line-height:12.6px;color:#222;left:-287.20px;width:600px;text-align:center;">11</div>
<div class="t" style="top:461.13px;font-size:12.6px;line-height:12.6px;color:#222;left:-287.20px;width:600px;text-align:center;">12</div>
<div class="t" style="top:481.13px;font-size:12.6px;line-height:12.6px;color:#222;left:-287.20px;width:600px;text-align:center;">13</div>
<div class="t" style="top:501.13px;font-size:12.6px;line-height:12.6px;color:#222;left:-287.20px;width:600px;text-align:center;">14</div>
<div class="t" style="top:521.13px;font-size:12.6px;line-height:12.6px;color:#222;left:-287.20px;width:600px;text-align:center;">15</div>
<div class="t" style="top:541.13px;font-size:12.6px;line-height:12.6px;color:#222;left:-287.20px;width:600px;text-align:center;">16</div>
<div class="t" style="top:561.13px;font-size:12.6px;line-height:12.6px;color:#222;left:-287.20px;width:600px;text-align:center;">17</div>
<div class="t" style="top:581.13px;font-size:12.6px;line-height:12.6px;color:#222;left:-287.20px;width:600px;text-align:center;">18</div>
<div class="t" style="top:601.13px;font-size:12.6px;line-height:12.6px;color:#222;left:-287.20px;width:600px;text-align:center;">19</div>
<div class="t" style="top:621.13px;font-size:12.6px;line-height:12.6px;color:#222;left:-287.20px;width:600px;text-align:center;">20</div>
<div class="t" style="top:641.13px;font-size:12.6px;line-height:12.6px;color:#222;left:-287.20px;width:600px;text-align:center;">21</div>
<div class="t" style="top:661.13px;font-size:12.6px;line-height:12.6px;color:#222;left:-287.20px;width:600px;text-align:center;">22</div>
<div class="t" style="top:681.13px;font-size:12.6px;line-height:12.6px;color:#222;left:-287.20px;width:600px;text-align:center;">23</div>
<div class="t" style="top:701.13px;font-size:12.6px;line-height:12.6px;color:#222;left:-287.20px;width:600px;text-align:center;">24</div>
<div class="r" style="left:26px;top:311px;width:711px;height:20px;background:#f8f8f8;"></div>
<div class="r" style="left:26px;top:332px;width:711px;height:19px;background:#f8f8f8;"></div>
<div class="r" style="left:26px;top:415px;width:711px;height:20px;background:#f8f8f8;"></div>
<div class="r" style="left:26px;top:436px;width:711px;height:20px;background:#f8f8f8;"></div>
<div class="r" style="left:26px;top:227px;width:832px;height:19px;background:#217346;"></div>
<div class="r" style="left:738px;top:246px;width:120px;height:2px;background:#217346;"></div>
<div class="r" style="left:26px;top:246px;width:712px;height:2px;background:#d9d9d9;"></div>
<div class="r" style="left:26px;top:267px;width:712px;height:2px;background:#d9d9d9;"></div>
<div class="r" style="left:26px;top:288px;width:712px;height:2px;background:#d9d9d9;"></div>
<div class="r" style="left:26px;top:309px;width:712px;height:2px;background:#d9d9d9;"></div>
<div class="r" style="left:26px;top:330px;width:712px;height:2px;background:#d9d9d9;"></div>
<div class="r" style="left:26px;top:350px;width:712px;height:2px;background:#d9d9d9;"></div>
<div class="r" style="left:26px;top:371px;width:712px;height:2px;background:#d9d9d9;"></div>
<div class="r" style="left:26px;top:392px;width:712px;height:2px;background:#d9d9d9;"></div>
<div class="r" style="left:26px;top:413px;width:712px;height:2px;background:#d9d9d9;"></div>
<div class="r" style="left:26px;top:434px;width:712px;height:2px;background:#d9d9d9;"></div>
<div class="r" style="left:26px;top:455px;width:712px;height:2px;background:#d9d9d9;"></div>
<div class="r" style="left:178px;top:248px;width:2px;height:209px;background:#d9d9d9;"></div>
<div class="r" style="left:303px;top:248px;width:2px;height:209px;background:#d9d9d9;"></div>
<div class="r" style="left:437px;top:248px;width:2px;height:209px;background:#d9d9d9;"></div>
<div class="r" style="left:556px;top:248px;width:2px;height:209px;background:#d9d9d9;"></div>
<div class="r" style="left:631px;top:248px;width:2px;height:209px;background:#d9d9d9;"></div>
<div class="r" style="left:736px;top:248px;width:2px;height:209px;background:#d9d9d9;"></div>
<div class="t" style="top:230.09px;font-size:13.6px;line-height:13.6px;color:#fff;transform:scaleX(1.1264);transform-origin:center top;font-weight:bold;left:-197.40px;width:600px;text-align:center;-webkit-text-stroke:0.2px #fff;">ФИО</div>
<div class="t" style="top:230.09px;font-size:13.6px;line-height:13.6px;color:#fff;transform:scaleX(1.0862);transform-origin:center top;font-weight:bold;left:-58.50px;width:600px;text-align:center;-webkit-text-stroke:0.2px #fff;">Отдел</div>
<div class="t" style="top:230.09px;font-size:13.6px;line-height:13.6px;color:#fff;transform:scaleX(1.0631);transform-origin:center top;font-weight:bold;left:70.70px;width:600px;text-align:center;-webkit-text-stroke:0.2px #fff;">Дата найма</div>
<div class="t" style="top:230.09px;font-size:13.6px;line-height:13.6px;color:#fff;transform:scaleX(1.0643);transform-origin:center top;font-weight:bold;left:197.50px;width:600px;text-align:center;-webkit-text-stroke:0.2px #fff;">Зарплата</div>
<div class="t" style="top:230.09px;font-size:13.6px;line-height:13.6px;color:#fff;transform:scaleX(1.0904);transform-origin:center top;font-weight:bold;left:295.00px;width:600px;text-align:center;-webkit-text-stroke:0.2px #fff;">Премия</div>
<div class="t" style="top:230.09px;font-size:13.6px;line-height:13.6px;color:#fff;transform:scaleX(0.9862);transform-origin:center top;font-weight:bold;left:385.20px;width:600px;text-align:center;-webkit-text-stroke:0.2px #fff;">Статус</div>
<div class="t" style="top:230.09px;font-size:13.6px;line-height:13.6px;color:#fff;transform:scaleX(1.0758);transform-origin:center top;font-weight:bold;left:498.00px;width:600px;text-align:center;-webkit-text-stroke:0.2px #fff;">Сумма премии</div>
<div class="t" style="top:251.40px;font-size:14.3px;line-height:14.3px;color:#000;transform:scaleX(0.9935);transform-origin:center top;left:-197.50px;width:600px;text-align:center;-webkit-text-stroke:0.25px #000;">Морозов А.Д.</div>
<div class="t" style="top:251.40px;font-size:14.3px;line-height:14.3px;color:#1f4578;transform:scaleX(1.0142);transform-origin:center top;left:71.10px;width:600px;text-align:center;-webkit-text-stroke:0.25px #1f4578;">30.11.2018</div>
<div class="t" style="top:250.85px;font-size:14.0px;line-height:14.0px;color:#1b4f2c;transform:scaleX(0.9905);transform-origin:center top;font-weight:bold;left:197.80px;width:600px;text-align:center;-webkit-text-stroke:0.3px #1b4f2c;">95 000</div>
<div class="t" style="top:251.40px;font-size:14.3px;line-height:14.3px;color:#000;transform:scaleX(0.9953);transform-origin:center top;left:294.20px;width:600px;text-align:center;-webkit-text-stroke:0.25px #000;">25%</div>
<div class="t" style="top:251.40px;font-size:14.3px;line-height:14.3px;color:#000;transform:scaleX(1.0457);transform-origin:center top;left:384.60px;width:600px;text-align:center;-webkit-text-stroke:0.25px #000;">Работает</div>
<div class="t" style="top:272.40px;font-size:14.3px;line-height:14.3px;color:#000;transform:scaleX(0.9940);transform-origin:center top;left:-197.50px;width:600px;text-align:center;-webkit-text-stroke:0.25px #000;">Сидоров П.А.</div>
<div class="t" style="top:272.40px;font-size:14.3px;line-height:14.3px;color:#1f4578;transform:scaleX(0.9990);transform-origin:center top;left:71.10px;width:600px;text-align:center;-webkit-text-stroke:0.25px #1f4578;">10.03.2019</div>
<div class="t" style="top:271.85px;font-size:14.0px;line-height:14.0px;color:#1b4f2c;transform:scaleX(1.0018);transform-origin:center top;font-weight:bold;left:197.80px;width:600px;text-align:center;-webkit-text-stroke:0.3px #1b4f2c;">120 000</div>
<div class="t" style="top:272.40px;font-size:14.3px;line-height:14.3px;color:#000;transform:scaleX(0.9953);transform-origin:center top;left:294.20px;width:600px;text-align:center;-webkit-text-stroke:0.25px #000;">10%</div>
<div class="t" style="top:272.40px;font-size:14.3px;line-height:14.3px;color:#000;transform:scaleX(1.0457);transform-origin:center top;left:384.60px;width:600px;text-align:center;-webkit-text-stroke:0.25px #000;">Работает</div>
<div class="t" style="top:293.40px;font-size:14.3px;line-height:14.3px;color:#000;transform:scaleX(1.0223);transform-origin:center top;left:-197.50px;width:600px;text-align:center;-webkit-text-stroke:0.25px #000;">Иванов И.И.</div>
<div class="t" style="top:293.40px;font-size:14.3px;line-height:14.3px;color:#1f4578;transform:scaleX(0.9990);transform-origin:center top;left:71.10px;width:600px;text-align:center;-webkit-text-stroke:0.25px #1f4578;">15.01.2020</div>
<div class="t" style="top:292.85px;font-size:14.0px;line-height:14.0px;color:#1b4f2c;transform:scaleX(0.9905);transform-origin:center top;font-weight:bold;left:197.80px;width:600px;text-align:center;-webkit-text-stroke:0.3px #1b4f2c;">80 000</div>
<div class="t" style="top:293.40px;font-size:14.3px;line-height:14.3px;color:#000;transform:scaleX(0.9953);transform-origin:center top;left:294.20px;width:600px;text-align:center;-webkit-text-stroke:0.25px #000;">15%</div>
<div class="t" style="top:293.40px;font-size:14.3px;line-height:14.3px;color:#000;transform:scaleX(1.0457);transform-origin:center top;left:384.60px;width:600px;text-align:center;-webkit-text-stroke:0.25px #000;">Работает</div>
<div class="t" style="top:314.40px;font-size:14.3px;line-height:14.3px;color:#000;transform:scaleX(1.0037);transform-origin:center top;left:-197.50px;width:600px;text-align:center;-webkit-text-stroke:0.25px #000;">Петрова А.С.</div>
<div class="t" style="top:314.40px;font-size:14.3px;line-height:14.3px;color:#1f4578;transform:scaleX(0.9990);transform-origin:center top;left:71.10px;width:600px;text-align:center;-webkit-text-stroke:0.25px #1f4578;">22.06.2021</div>
<div class="t" style="top:313.85px;font-size:14.0px;line-height:14.0px;color:#1b4f2c;transform:scaleX(0.9905);transform-origin:center top;font-weight:bold;left:197.80px;width:600px;text-align:center;-webkit-text-stroke:0.3px #1b4f2c;">80 000</div>
<div class="t" style="top:314.40px;font-size:14.3px;line-height:14.3px;color:#000;transform:scaleX(0.9953);transform-origin:center top;left:294.20px;width:600px;text-align:center;-webkit-text-stroke:0.25px #000;">20%</div>
<div class="t" style="top:314.40px;font-size:14.3px;line-height:14.3px;color:#000;transform:scaleX(1.0530);transform-origin:center top;left:384.60px;width:600px;text-align:center;-webkit-text-stroke:0.25px #000;">Отпуск</div>
<div class="t" style="top:334.40px;font-size:14.3px;line-height:14.3px;color:#000;transform:scaleX(1.0019);transform-origin:center top;left:-197.50px;width:600px;text-align:center;-webkit-text-stroke:0.25px #000;">Козлова М.В.</div>
<div class="t" style="top:334.40px;font-size:14.3px;line-height:14.3px;color:#1f4578;transform:scaleX(0.9990);transform-origin:center top;left:71.10px;width:600px;text-align:center;-webkit-text-stroke:0.25px #1f4578;">05.09.2022</div>
<div class="t" style="top:333.85px;font-size:14.0px;line-height:14.0px;color:#1b4f2c;transform:scaleX(0.9905);transform-origin:center top;font-weight:bold;left:197.80px;width:600px;text-align:center;-webkit-text-stroke:0.3px #1b4f2c;">60 000</div>
<div class="t" style="top:334.40px;font-size:14.3px;line-height:14.3px;color:#000;transform:scaleX(0.9953);transform-origin:center top;left:294.20px;width:600px;text-align:center;-webkit-text-stroke:0.25px #000;">12%</div>
<div class="t" style="top:334.40px;font-size:14.3px;line-height:14.3px;color:#000;transform:scaleX(1.0457);transform-origin:center top;left:384.60px;width:600px;text-align:center;-webkit-text-stroke:0.25px #000;">Работает</div>
<div class="t" style="top:355.40px;font-size:14.3px;line-height:14.3px;color:#000;transform:scaleX(0.9935);transform-origin:center top;left:-197.50px;width:600px;text-align:center;-webkit-text-stroke:0.25px #000;">Морозов А.Д.</div>
<div class="t" style="top:355.40px;font-size:14.3px;line-height:14.3px;color:#1f4578;transform:scaleX(1.0142);transform-origin:center top;left:71.10px;width:600px;text-align:center;-webkit-text-stroke:0.25px #1f4578;">30.11.2018</div>
<div class="t" style="top:354.85px;font-size:14.0px;line-height:14.0px;color:#1b4f2c;transform:scaleX(0.9905);transform-origin:center top;font-weight:bold;left:197.80px;width:600px;text-align:center;-webkit-text-stroke:0.3px #1b4f2c;">95 000</div>
<div class="t" style="top:355.40px;font-size:14.3px;line-height:14.3px;color:#000;transform:scaleX(0.9953);transform-origin:center top;left:294.20px;width:600px;text-align:center;-webkit-text-stroke:0.25px #000;">25%</div>
<div class="t" style="top:355.40px;font-size:14.3px;line-height:14.3px;color:#000;transform:scaleX(1.0457);transform-origin:center top;left:384.60px;width:600px;text-align:center;-webkit-text-stroke:0.25px #000;">Работает</div>
<div class="t" style="top:376.40px;font-size:14.3px;line-height:14.3px;color:#000;transform:scaleX(0.9940);transform-origin:center top;left:-197.50px;width:600px;text-align:center;-webkit-text-stroke:0.25px #000;">Сидоров П.А.</div>
<div class="t" style="top:376.40px;font-size:14.3px;line-height:14.3px;color:#1f4578;transform:scaleX(0.9990);transform-origin:center top;left:71.10px;width:600px;text-align:center;-webkit-text-stroke:0.25px #1f4578;">10.03.2019</div>
<div class="t" style="top:375.85px;font-size:14.0px;line-height:14.0px;color:#1b4f2c;transform:scaleX(1.0018);transform-origin:center top;font-weight:bold;left:197.80px;width:600px;text-align:center;-webkit-text-stroke:0.3px #1b4f2c;">120 000</div>
<div class="t" style="top:376.40px;font-size:14.3px;line-height:14.3px;color:#000;transform:scaleX(0.9953);transform-origin:center top;left:294.20px;width:600px;text-align:center;-webkit-text-stroke:0.25px #000;">10%</div>
<div class="t" style="top:376.40px;font-size:14.3px;line-height:14.3px;color:#000;transform:scaleX(1.0457);transform-origin:center top;left:384.60px;width:600px;text-align:center;-webkit-text-stroke:0.25px #000;">Работает</div>
<div class="t" style="top:397.40px;font-size:14.3px;line-height:14.3px;color:#000;transform:scaleX(1.0223);transform-origin:center top;left:-197.50px;width:600px;text-align:center;-webkit-text-stroke:0.25px #000;">Иванов И.И.</div>
<div class="t" style="top:397.40px;font-size:14.3px;line-height:14.3px;color:#1f4578;transform:scaleX(0.9990);transform-origin:center top;left:71.10px;width:600px;text-align:center;-webkit-text-stroke:0.25px #1f4578;">15.01.2020</div>
<div class="t" style="top:396.85px;font-size:14.0px;line-height:14.0px;color:#1b4f2c;transform:scaleX(0.9905);transform-origin:center top;font-weight:bold;left:197.80px;width:600px;text-align:center;-webkit-text-stroke:0.3px #1b4f2c;">80 000</div>
<div class="t" style="top:397.40px;font-size:14.3px;line-height:14.3px;color:#000;transform:scaleX(0.9953);transform-origin:center top;left:294.20px;width:600px;text-align:center;-webkit-text-stroke:0.25px #000;">15%</div>
<div class="t" style="top:397.40px;font-size:14.3px;line-height:14.3px;color:#000;transform:scaleX(1.0457);transform-origin:center top;left:384.60px;width:600px;text-align:center;-webkit-text-stroke:0.25px #000;">Работает</div>
<div class="t" style="top:418.40px;font-size:14.3px;line-height:14.3px;color:#000;transform:scaleX(1.0037);transform-origin:center top;left:-197.50px;width:600px;text-align:center;-webkit-text-stroke:0.25px #000;">Петрова А.С.</div>
<div class="t" style="top:418.40px;font-size:14.3px;line-height:14.3px;color:#1f4578;transform:scaleX(0.9990);transform-origin:center top;left:71.10px;width:600px;text-align:center;-webkit-text-stroke:0.25px #1f4578;">22.06.2021</div>
<div class="t" style="top:417.85px;font-size:14.0px;line-height:14.0px;color:#1b4f2c;transform:scaleX(0.9905);transform-origin:center top;font-weight:bold;left:197.80px;width:600px;text-align:center;-webkit-text-stroke:0.3px #1b4f2c;">80 000</div>
<div class="t" style="top:418.40px;font-size:14.3px;line-height:14.3px;color:#000;transform:scaleX(0.9953);transform-origin:center top;left:294.20px;width:600px;text-align:center;-webkit-text-stroke:0.25px #000;">20%</div>
<div class="t" style="top:418.40px;font-size:14.3px;line-height:14.3px;color:#000;transform:scaleX(1.0530);transform-origin:center top;left:384.60px;width:600px;text-align:center;-webkit-text-stroke:0.25px #000;">Отпуск</div>
<div class="t" style="top:439.40px;font-size:14.3px;line-height:14.3px;color:#000;transform:scaleX(1.0019);transform-origin:center top;left:-197.50px;width:600px;text-align:center;-webkit-text-stroke:0.25px #000;">Козлова М.В.</div>
<div class="t" style="top:439.40px;font-size:14.3px;line-height:14.3px;color:#1f4578;transform:scaleX(0.9990);transform-origin:center top;left:71.10px;width:600px;text-align:center;-webkit-text-stroke:0.25px #1f4578;">05.09.2022</div>
<div class="t" style="top:438.85px;font-size:14.0px;line-height:14.0px;color:#1b4f2c;transform:scaleX(0.9905);transform-origin:center top;font-weight:bold;left:197.80px;width:600px;text-align:center;-webkit-text-stroke:0.3px #1b4f2c;">60 000</div>
<div class="t" style="top:439.40px;font-size:14.3px;line-height:14.3px;color:#000;transform:scaleX(0.9953);transform-origin:center top;left:294.20px;width:600px;text-align:center;-webkit-text-stroke:0.25px #000;">12%</div>
<div class="t" style="top:439.40px;font-size:14.3px;line-height:14.3px;color:#000;transform:scaleX(1.0457);transform-origin:center top;left:384.60px;width:600px;text-align:center;-webkit-text-stroke:0.25px #000;">Работает</div>
<div class="r" style="left:179px;top:246px;width:127px;height:24px;border:2px solid #217346;border-top-width:2px;box-sizing:border-box;"></div>
<div class="r" style="left:302px;top:265px;width:6px;height:6px;background:#217346;border:1px solid #fff;box-sizing:border-box;"></div>
<div class="r" style="left:881px;top:209px;width:15px;height:15px;background:#fff;border:1px solid #a6a6a6;box-sizing:border-box;"></div>
<svg class="r" style="left:883px;top:212px;" width="11" height="8" viewBox="0 0 11 8"><path d="M1.5 6.5 L5.5 2.5 L9.5 6.5 Z" fill="#6b6b6b"/></svg>
<div class="r" style="left:881px;top:224px;width:15px;height:454px;background:#fff;border:1px solid #a6a6a6;box-sizing:border-box;"></div>
<div class="r" style="left:881px;top:678px;width:15px;height:21px;background:#d9d9d9;"></div>
<div class="r" style="left:881px;top:699px;width:15px;height:15px;background:#fff;border:1px solid #a6a6a6;box-sizing:border-box;"></div>
<svg class="r" style="left:883px;top:702px;" width="11" height="8" viewBox="0 0 11 8"><path d="M1.5 2 L5.5 6 L9.5 2 Z" fill="#6b6b6b"/></svg>
<div class="r" style="left:0px;top:713px;width:899px;height:1px;background:#a9a9a9;"></div>
<div class="r" style="left:0px;top:714px;width:899px;height:27px;background:#e6e6e6;"></div>
<svg class="r" style="left:25px;top:721px;" width="8" height="11" viewBox="0 0 8 11"><path d="M6.3 1.5 L2 5.3 L6.3 9.1 Z" fill="#c2c2c2"/></svg>
<svg class="r" style="left:55px;top:721px;" width="8" height="11" viewBox="0 0 8 11"><path d="M1.3 1.5 L5.6 5.3 L1.3 9.1 Z" fill="#c2c2c2"/></svg>
<div class="r" style="left:100px;top:717px;width:1px;height:19px;background:#b0b0b0;"></div>
<div class="t" style="top:721.16px;font-size:12.8px;line-height:12.8px;color:#444;transform:scaleX(0.9329);transform-origin:center top;left:-170.70px;width:600px;text-align:center;">Лист1</div>
<div class="r" style="left:161px;top:713px;width:59px;height:25px;background:#fff;border-left:1px solid #b8b8b8;border-right:1px solid #b8b8b8;box-sizing:border-box;"></div>
<div class="r" style="left:161px;top:736px;width:59px;height:2px;background:#217346;"></div>
<div class="t" style="top:721.16px;font-size:12.8px;line-height:12.8px;color:#217346;transform:scaleX(0.9453);transform-origin:center top;font-weight:bold;left:-110.40px;width:600px;text-align:center;">Лист2</div>
<svg class="r" style="left:252px;top:718px;" width="19" height="19" viewBox="0 0 19 19"><g fill="none" stroke="#707070"><circle cx="9" cy="9.3" r="7.3" stroke-width="1.1"/><path d="M9 5.3 V13.3 M5 9.3 H13" stroke-width="1.5"/></g></svg>
<div class="r" style="left:556px;top:720px;width:15px;height:15px;background:#fff;border:1px solid #a6a6a6;box-sizing:border-box;"></div>
<svg class="r" style="left:559px;top:723px;" width="9" height="9" viewBox="0 0 9 9"><path d="M6.5 1 L2 4.5 L6.5 8 Z" fill="#6b6b6b"/></svg>
<div class="r" style="left:571px;top:720px;width:255px;height:15px;background:#fff;border:1px solid #a6a6a6;box-sizing:border-box;"></div>
<div class="r" style="left:826px;top:721px;width:36px;height:13px;background:#d9d9d9;"></div>
<div class="r" style="left:863px;top:720px;width:15px;height:15px;background:#fff;border:1px solid #a6a6a6;box-sizing:border-box;"></div>
<svg class="r" style="left:866px;top:723px;" width="9" height="9" viewBox="0 0 9 9"><path d="M2.5 1 L7 4.5 L2.5 8 Z" fill="#6b6b6b"/></svg>
<div class="r" style="left:0px;top:741px;width:899px;height:22px;background:#f3f2f1;border-top:1px solid #d6d6d6;box-sizing:border-box;"></div>
<div class="t" style="top:745.64px;font-size:12px;line-height:12px;color:#3a3a3a;transform:scaleX(0.9555);transform-origin:left top;left:8.80px;">Готово</div>
<svg class="r" style="left:63px;top:745px;" width="17" height="15" viewBox="0 0 17 15"><g fill="none" stroke="#333" stroke-width="1"><path d="M1.5 13.5 V1.5 H14.5 V6"/><path d="M1.5 3.5 H14.5"/><path d="M3 6.5 H5.5 M3 8.5 H5 M3 10.5 H5"/><path d="M1.5 13.5 H6"/></g><circle cx="11" cy="10" r="4.5" fill="#f3f2f1" stroke="#333" stroke-width="1"/><circle cx="11" cy="10" r="2" fill="#333"/></svg>
<div class="r" style="left:585px;top:742px;width:40px;height:21px;background:#d4d4d4;"></div>
<svg class="r" style="left:597px;top:744px;" width="16" height="16" viewBox="0 0 16 16"><g fill="none" stroke="#3a3a3a" stroke-width="1.2"><rect x="1.6" y="1.6" width="12" height="12"/><path d="M5.6 1.6 V13.6 M9.6 1.6 V13.6 M1.6 5.6 H13.6 M1.6 9.6 H13.6"/></g></svg>
<svg class="r" style="left:637px;top:744px;" width="16" height="16" viewBox="0 0 16 16"><g fill="none" stroke="#3a3a3a" stroke-width="1.2"><rect x="1.6" y="1.6" width="12.8" height="12"/><rect x="4.6" y="4.1" width="6.8" height="7"/><path d="M6 6.2 H10 M6 7.7 H10 M6 9.2 H10" stroke-width="1"/></g></svg>
<svg class="r" style="left:677px;top:744px;" width="16" height="16" viewBox="0 0 16 16"><g fill="none" stroke="#3a3a3a" stroke-width="1.2"><rect x="1.6" y="1.6" width="12.8" height="12"/><path d="M1.6 8.6 H9.6 V1.6 M5.6 1.6 V8.6"/></g></svg>
<div class="r" style="left:710px;top:751px;width:9px;height:1px;background:#444;"></div>
<div class="r" style="left:724px;top:751px;width:100px;height:1px;background:#9a9a9a;"></div>
<div class="r" style="left:772px;top:747px;width:6px;height:11px;background:#6b6b6b;"></div>
<div class="r" style="left:828px;top:751px;width:10px;height:1px;background:#444;"></div>
<div class="r" style="left:832px;top:747px;width:1px;height:10px;background:#444;"></div>
<div class="t" style="top:745.67px;font-size:12.2px;line-height:12.2px;color:#3a3a3a;transform:scaleX(0.8732);transform-origin:left top;left:850.00px;">100 %</div>
</div>
<div style="position:absolute;left:190.5px;top:253px;width:139.8px;height:43px;box-sizing:border-box;border:4.3px solid #ff0000;border-radius:10px;filter:drop-shadow(2px 3px 2.5px rgba(0,0,0,0.45));"></div>
<div style="position:absolute;left:352.5px;top:43px;width:74.10000000000002px;height:45.3px;box-sizing:border-box;border:4.3px solid #ff0000;border-radius:10px;filter:drop-shadow(2px 3px 2.5px rgba(0,0,0,0.45));"></div>
<div style="position:absolute;left:460.3px;top:80px;width:88.30000000000001px;height:84px;box-sizing:border-box;border:4.3px solid #ff0000;border-radius:10px;filter:drop-shadow(2px 3px 2.5px rgba(0,0,0,0.45));"></div>
<svg style="position:absolute;left:151.2px;top:276.3px;overflow:visible" width="54.8" height="54.8" viewBox="-27.4 -27.4 54.8 54.8">
<defs><linearGradient id="g1" x1="0.15" y1="0.1" x2="0.85" y2="0.9"><stop offset="0" stop-color="#ffa577"/><stop offset="0.5" stop-color="#fb6a35"/><stop offset="1" stop-color="#ff3a08"/></linearGradient>
<filter id="f1" x="-30%" y="-30%" width="160%" height="160%"><feGaussianBlur stdDeviation="1.6"/></filter></defs>
<circle cx="1.5" cy="2" r="23.4" fill="rgba(0,0,0,0.35)" filter="url(#f1)"/>
<circle cx="0" cy="0" r="23.099999999999998" fill="url(#g1)" stroke="#b8361a" stroke-width="1.1"/>
<path d="M -6.0 -8.4 L -0.6 -10.9 L 3.5 -10.9 L 3.5 10.4 L -1.5 10.4 L -1.5 -3.8 L -6.0 -3.8 Z" fill="#fff" stroke="#111" stroke-width="1.8" stroke-linejoin="round"/>
</svg>
<svg style="position:absolute;left:315.6px;top:61.8px;overflow:visible" width="54" height="54" viewBox="-27.0 -27.0 54 54">
<defs><linearGradient id="g2" x1="0.15" y1="0.1" x2="0.85" y2="0.9"><stop offset="0" stop-color="#ffa577"/><stop offset="0.5" stop-color="#fb6a35"/><stop offset="1" stop-color="#ff3a08"/></linearGradient>
<filter id="f2" x="-30%" y="-30%" width="160%" height="160%"><feGaussianBlur stdDeviation="1.6"/></filter></defs>
<circle cx="1.5" cy="2" r="23.0" fill="rgba(0,0,0,0.35)" filter="url(#f2)"/>
<circle cx="0" cy="0" r="22.7" fill="url(#g2)" stroke="#b8361a" stroke-width="1.1"/>
<text x="-0.8" y="10.2" text-anchor="middle" transform="scale(0.95,1)" font-family="Liberation Sans" font-weight="bold" font-size="28.9" fill="#fff" stroke="#111" stroke-width="3" paint-order="stroke" stroke-linejoin="round">2</text>
</svg>
<svg style="position:absolute;left:530.8px;top:138.6px;overflow:visible" width="54" height="54" viewBox="-27.0 -27.0 54 54">
<defs><linearGradient id="g3" x1="0.15" y1="0.1" x2="0.85" y2="0.9"><stop offset="0" stop-color="#ffa577"/><stop offset="0.5" stop-color="#fb6a35"/><stop offset="1" stop-color="#ff3a08"/></linearGradient>
<filter id="f3" x="-30%" y="-30%" width="160%" height="160%"><feGaussianBlur stdDeviation="1.6"/></filter></defs>
<circle cx="1.5" cy="2" r="23.0" fill="rgba(0,0,0,0.35)" filter="url(#f3)"/>
<circle cx="0" cy="0" r="22.7" fill="url(#g3)" stroke="#b8361a" stroke-width="1.1"/>
<text x="-0.8" y="10.2" text-anchor="middle" transform="scale(0.95,1)" font-family="Liberation Sans" font-weight="bold" font-size="28.9" fill="#fff" stroke="#111" stroke-width="3" paint-order="stroke" stroke-linejoin="round">3</text>
</svg>
<div style="position:absolute;left:17px;top:17px;width:0;height:0;">

</div>
</body></html>
